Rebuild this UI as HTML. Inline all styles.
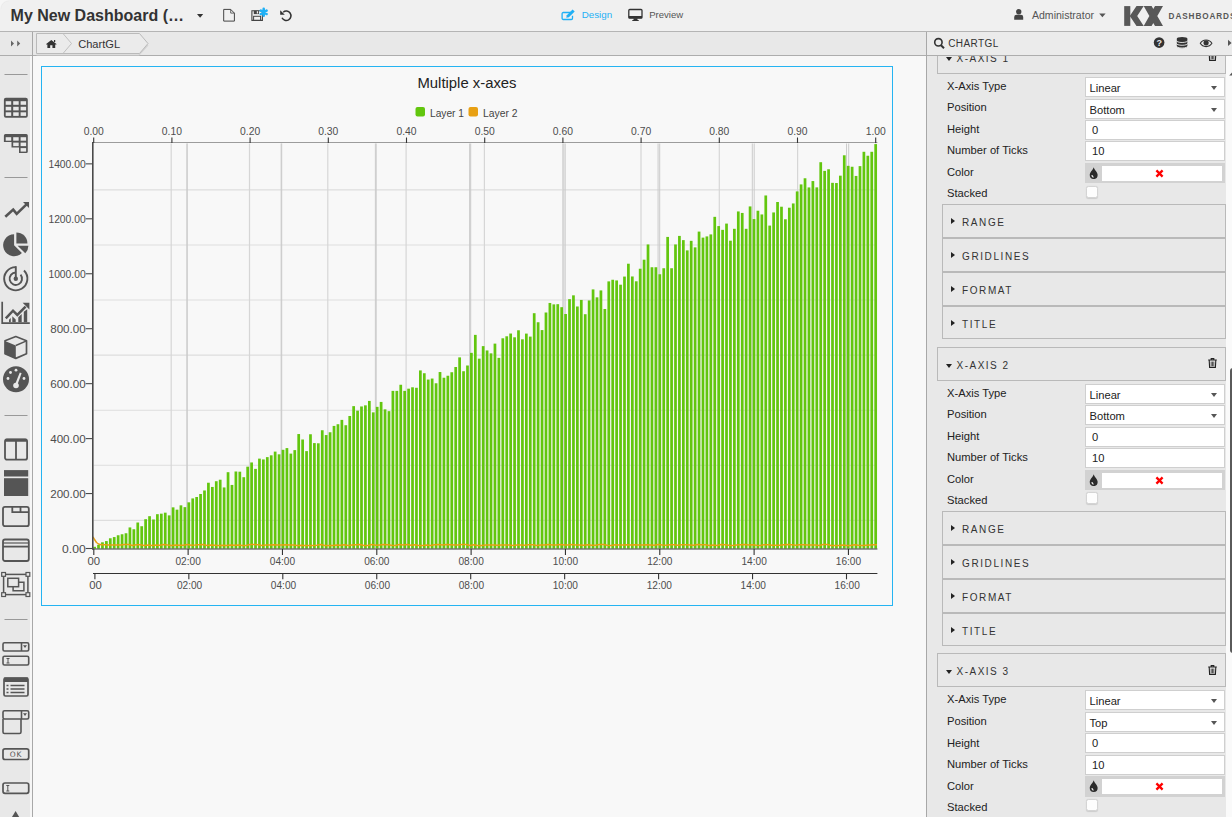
<!DOCTYPE html>
<html lang="en"><head><meta charset="utf-8"><title>My New Dashboard - KX Dashboards</title>
<style>
*{box-sizing:border-box;margin:0;padding:0}
html,body{width:1232px;height:817px;overflow:hidden;background:#f8f8f8;font-family:"Liberation Sans","DejaVu Sans",sans-serif;color:#333}
#top{position:absolute;left:0;top:0;width:1232px;height:31px;background:#f0f0f0}
#topb{position:absolute;left:0;top:31px;width:1232px;height:1px;background:#b4b4b4}
#title{position:absolute;left:10.600px;top:7px;font-size:16px;font-weight:bold;color:#333;white-space:nowrap}
.ti{position:absolute}
#row2{position:absolute;left:0;top:32px;width:1232px;height:23px;background:#e8e8e8}
#row2b{position:absolute;left:0;top:55px;width:1232px;height:1px;background:#adadad}
#side{position:absolute;left:0;top:56px;width:30px;height:761px;background:#e8e8e8}
#sidew{position:absolute;left:30px;top:56px;width:2px;height:761px;background:#f6f6f6}
#sideb{position:absolute;left:32px;top:32px;width:1px;height:785px;background:#a8a8a8}
#sidesvg{position:absolute;left:0;top:32px}
#crumb{position:absolute;left:36px;top:33px}
#crumbt{position:absolute;left:78.200px;top:38px;font-size:11.100px;color:#333}
#chartbox{position:absolute;left:41px;top:66px;width:852px;height:540px;border:1px solid #25b4f2;background:#f8f8f8}
.chart{position:absolute;left:0;top:0}
#mode{position:absolute;top:0;left:0}
.mt{position:absolute;top:8.5px;font-size:10.5px}
#rp{position:absolute;left:927px;top:56px;width:299px;height:761px;background:#e8e8e8;overflow:hidden}
#rpb{position:absolute;left:926px;top:32px;width:1px;height:785px;background:#a8a8a8}
#rph{position:absolute;left:927px;top:32px;width:305px;height:23px;background:#ebebeb}
#rpt{position:absolute;left:948.200px;top:37.500px;font-size:10px;letter-spacing:0.400px;color:#333}
#sb{position:absolute;left:1226px;top:56px;width:6px;height:761px;background:#fafafa}
#sbt{position:absolute;left:1229.500px;top:367.500px;width:6px;height:285px;background:#5a5a5a;border-radius:3px}
.sec{position:absolute;left:10px;width:289px;height:33.500px;border:1px solid #b9b9b9;background:#e8e8e8}
.sect{position:absolute;left:18.600px;top:11.800px;font-size:10px;letter-spacing:1.470px;color:#333}
.caret-d{position:absolute;left:8px;top:15.500px;border-left:3.500px solid transparent;border-right:3.500px solid transparent;border-top:4px solid #222}
.trash{position:absolute;left:270px;top:9.500px}
.lbl{position:absolute;left:20px;font-size:11.200px;color:#222;height:20px;line-height:17px;white-space:nowrap}
.inp{position:absolute;left:158px;width:140px;height:20px;border:1px solid #cfcfcf;background:#fff;font-size:11.200px;color:#222;line-height:20px;white-space:nowrap}
.sel{padding-left:3.500px}
.num{padding-left:6px;line-height:18.600px}
.sel i{position:absolute;right:7px;top:8px;border-left:3px solid transparent;border-right:3px solid transparent;border-top:4px solid #555}
.col{position:absolute;left:158px;width:140px;height:20.500px;background:#d2d2d2}
.drop{position:absolute;left:4.300px;top:4.100px}
.colw{position:absolute;left:16.500px;top:3px;width:120.500px;height:15px;background:#fff}
.rx{position:absolute;left:53.300px;top:3.100px}
.chk{position:absolute;left:158.500px;width:12px;height:12px;border:1px solid #d4d4d4;border-radius:2.500px;background:#fdfdfd;box-shadow:0 0.500px 1px rgba(0,0,0,.12)}
.sub{position:absolute;left:14.500px;width:284.500px;height:33px;border:1px solid #b9b9b9;background:#e8e8e8}
.subt{position:absolute;left:19.500px;top:12.300px;font-size:10px;letter-spacing:1.600px;color:#333}
.caret-r{position:absolute;left:8.800px;top:13.500px;border-top:3.500px solid transparent;border-bottom:3.500px solid transparent;border-left:4.500px solid #222}
</style></head><body>
<div id="top"></div><div id="topb"></div>
<div id="corner" style="position:absolute;left:0;top:0;width:9px;height:9px;background:radial-gradient(circle at 100% 100%,rgba(246,246,246,0) 7.200px,#ebebeb 8px,#f6f6f6 9px)"></div>
<div id="title">My New Dashboard (…</div>
<svg id="mode" width="1232" height="31" viewBox="0 0 1232 31" font-family="'Liberation Sans','DejaVu Sans',sans-serif">
 <!-- title caret -->
 <path d="M197 14h6.200l-3.100 3.800z" fill="#333"/>
 <!-- new file -->
 <path d="M223.700 9.400h7l3.700 3.700v8h-10.700z" fill="none" stroke="#444" stroke-width="1"/><path d="M230.700 9.400v3.700h3.700" fill="none" stroke="#444" stroke-width="0.800"/>
 <!-- save -->
 <path d="M251.900 10.700h8.800l1.700 1.700v8h-10.500z" fill="none" stroke="#444" stroke-width="1.100"/><rect x="253.800" y="10.700" width="5.200" height="3.400" fill="#444"/><rect x="256.800" y="11.200" width="1.300" height="2.300" fill="#eee"/><rect x="253.600" y="16.300" width="7" height="4.200" fill="none" stroke="#444" stroke-width="1"/>
 <g stroke="#1fb0f5" stroke-width="2.600" stroke-linecap="round"><path d="M263.700 8.900v6.800M260.800 10.600l5.800 3.400M260.800 14l5.800-3.400"/></g>
 <!-- undo -->
 <path d="M283.200 12.200a4.700 4.700 0 1 1-1.200 5.600" fill="none" stroke="#333" stroke-width="1.500"/><path d="M280.200 10.200v4.600h4.600z" fill="#333"/>
 <!-- design -->
 <g fill="none" stroke="#1fb0f5" stroke-width="1.300"><path d="M571.500 12.500v-0h-8.200a1.200 1.200 0 0 0-1.200 1.200v4.600a1.200 1.200 0 0 0 1.200 1.200h8a1.200 1.200 0 0 0 1.200-1.200v-2.600" /></g>
 <path d="M566.300 17.800l0.500-2.600 5.800-5.800 2.100 2.100-5.800 5.800z" fill="#1fb0f5"/>
 <text x="581.700" y="18" font-size="9.800" fill="#1fb0f5" textLength="30.500" lengthAdjust="spacingAndGlyphs">Design</text>
 <!-- preview -->
 <rect x="628.800" y="9.500" width="13.200" height="8.700" rx="1" fill="#f0f0f0" stroke="#333" stroke-width="1.300"/><rect x="628.800" y="16" width="13.200" height="2.200" fill="#333"/><path d="M633.500 18.200h4v1.700h1.200v1h-6.400v-1h1.200z" fill="#333"/>
 <text x="649.200" y="18" font-size="9.800" fill="#555" textLength="34" lengthAdjust="spacingAndGlyphs">Preview</text>
 <!-- user -->
 <circle cx="1018.700" cy="11.800" r="2.700" fill="#444"/><path d="M1014.200 19.700v-2.600a2.400 2.400 0 0 1 2.400-2.400h4.200a2.400 2.400 0 0 1 2.400 2.400v2.600z" fill="#444"/>
 <text x="1032" y="18.600" font-size="10" fill="#555" textLength="62" lengthAdjust="spacingAndGlyphs">Administrator</text>
 <path d="M1099.200 13.600h6.400l-3.200 3.600z" fill="#555"/>
 <!-- KX logo -->
 <g fill="#585858"><rect x="1124.200" y="6.100" width="6.100" height="19.800"/><path d="M1136.500 6.100h7.200l-6.500 9.900 6.500 9.900h-7.200l-6.700-9.900z"/><path d="M1143.700 6.100h7.900l11.400 19.800h-8zM1155 6.100h8l-11.400 19.800h-7.900z"/></g>
 <text x="1168.600" y="18.900" font-size="8.200" font-weight="bold" fill="#585858" textLength="66.800" lengthAdjust="spacing">DASHBOARDS</text>
</svg>
<div id="row2"></div><div id="row2b"></div>
<div id="side"></div><div id="sidew"></div><div id="sideb"></div>
<svg id="sidesvg" width="32" height="785" viewBox="0 32 32 785">
 <!-- expand arrows -->
 <path d="M11 40.500l3 3-3 3zM17.200 40.500l3 3-3 3z" fill="#666"/>
 <g stroke="#999" stroke-width="1"><path d="M4.500 74.500h23M4.500 177.500h23M4.500 415.500h23M4.500 619.500h23"/></g>
 <!-- table -->
 <rect x="3.900" y="97.700" width="23.900" height="20.100" rx="2" fill="#555"/><g fill="#e8e8e8"><rect x="5.7" y="101.2" width="5.500" height="3.600"/><rect x="13.2" y="101.2" width="5.500" height="3.600"/><rect x="20.6" y="101.2" width="5.500" height="3.600"/><rect x="5.7" y="106.8" width="5.500" height="3.600"/><rect x="13.2" y="106.8" width="5.500" height="3.600"/><rect x="20.6" y="106.8" width="5.500" height="3.600"/><rect x="5.7" y="112.3" width="5.500" height="3.600"/><rect x="13.2" y="112.3" width="5.500" height="3.600"/><rect x="20.6" y="112.3" width="5.500" height="3.600"/></g>
 <!-- pivot -->
 <path d="M5.400 134.100h20.900a1.500 1.500 0 0 1 1.500 1.500v15.800a1.500 1.500 0 0 1-1.500 1.500h-7.300v-5.500h-7.500v-5.300h-7.600v-6.500a1.500 1.500 0 0 1 1.500-1.500z" fill="#555"/><g fill="#e8e8e8"><rect x="5.7" y="137.2" width="5.500" height="3.500"/><rect x="13.2" y="137.2" width="5.500" height="3.500"/><rect x="20.6" y="137.2" width="5.500" height="3.500"/><rect x="13.2" y="142.6" width="5.500" height="3.500"/><rect x="20.6" y="142.6" width="5.500" height="3.500"/><rect x="20.6" y="148.1" width="5.500" height="3.500"/></g>
 <!-- line chart -->
 <path d="M5.300 216.800L13.200 209.600L16.700 213.900L26.500 204.400" fill="none" stroke="#555" stroke-width="2.600"/><path d="M23 201.900h6v6z" fill="#555"/>
 <!-- pie -->
 <path d="M14.100 245.300V234.300A11 11 0 1 0 21.900 253.100Z" fill="#555"/>
 <path d="M16.400 243.400V232.400A11 11 0 0 1 27.400 243.400Z" fill="#555"/>
 <path d="M17.600 245.700H28.400A11 11 0 0 1 25.300 253.300Z" fill="#555"/>
 <!-- radar -->
 <g fill="none" stroke="#555" stroke-width="1.900"><path d="M15.800 267.100A11.600 11.600 0 1 0 24 270.500"/><path d="M15.800 272.500A6.200 6.200 0 1 0 20.550 274.700"/><path d="M15.800 266.200V278.700"/></g><circle cx="15.800" cy="278.700" r="2.200" fill="#555"/>
 <!-- line bar chart -->
 <path d="M2.200 301.800v21.300h27.600" fill="none" stroke="#555" stroke-width="1.700"/><path d="M5.800 318.300l7.200-7.600 4.300 4.300 8.300-8.300" fill="none" stroke="#555" stroke-width="2.500"/><path d="M22.600 302.700h6.800v6.800z" fill="#555"/><path d="M9 322.300v-2.500l1.800-1.800v4.300zM12.300 322.300v-6l3.400 3.300v2.700zM18.300 322.300v-5l3.400-3.400v8.400zM23.800 322.300v-10.500l3.400-2.500v13z" fill="#555"/>
 <!-- cube -->
 <path d="M15.800 336.500l10.700 4.200v13l-10.700 4.700-10.800-4.700v-13z" fill="none" stroke="#555" stroke-width="1.700" stroke-linejoin="round"/><path d="M5 341l10.800 4.500v13l-10.800-4.800z" fill="#555"/><path d="M15.800 345.500l10.700-4.600" stroke="#555" stroke-width="1.500"/>
 <!-- gauge -->
 <circle cx="16" cy="379.200" r="13" fill="#555"/><g fill="#e8e8e8"><circle cx="8" cy="378.500" r="1.400"/><circle cx="10.500" cy="372.500" r="1.400"/><circle cx="16" cy="370.200" r="1.400"/><circle cx="24" cy="378.500" r="1.400"/><circle cx="16" cy="385.500" r="2.800"/><path d="M15.200 384l4.600-11.500 1.800 0.700-4.200 11.600z"/></g>
 <!-- split layout -->
 <g fill="none" stroke="#555" stroke-width="1.800"><rect x="5" y="439.500" width="22.100" height="20.200" rx="2"/><path d="M16 440v19.700"/></g><rect x="5" y="438.700" width="22.100" height="3" rx="1" fill="#555"/>
 <!-- filled layout -->
 <rect x="4" y="470.100" width="24.200" height="6.400" fill="#555"/><rect x="4" y="478.200" width="24.200" height="17.800" fill="#555"/>
 <!-- tab layout -->
 <g fill="none" stroke="#555" stroke-width="1.800"><rect x="3" y="506.800" width="25.800" height="19.400" rx="2"/><path d="M12.300 506.800v5.400h16.500M20.500 506.800v5.400"/></g>
 <!-- window layout -->
 <g fill="none" stroke="#555" stroke-width="1.800"><rect x="3" y="539.500" width="25.800" height="21.500" rx="2"/><path d="M3 546.600h25.800"/><path d="M3 543h25.800" stroke-width="1.200"/></g>
 <!-- overlap -->
 <g fill="none" stroke="#555" stroke-width="1.500"><rect x="3.600" y="574.400" width="24.300" height="20.200"/><rect x="7.800" y="578.300" width="10.800" height="8.400"/><path d="M18.600 582.200h5.300v8.600h-10.800v-4.100"/></g><g fill="#e8e8e8" stroke="#555" stroke-width="1.200"><rect x="1.700" y="572.500" width="3.800" height="3.800"/><rect x="26" y="572.500" width="3.800" height="3.800"/><rect x="1.700" y="592.700" width="3.800" height="3.800"/><rect x="26" y="592.700" width="3.800" height="3.800"/></g>
 <!-- dropdown -->
 <g fill="none" stroke="#555" stroke-width="1.600"><rect x="3" y="642.800" width="25.700" height="8.200" rx="1.500"/><path d="M21.500 642.800v8.200"/></g><path d="M23 645.300h4l-2 2.800z" fill="#555"/>
 <!-- text input -->
 <rect x="3" y="656.300" width="25.700" height="8.700" rx="1.500" fill="none" stroke="#555" stroke-width="1.600"/><path d="M6.500 658.500h3M6.500 663h3M8 658.500v4.500" stroke="#555" stroke-width="1"/>
 <!-- data form/list -->
 <rect x="4" y="678" width="24" height="18" rx="1.500" fill="none" stroke="#555" stroke-width="1.700"/><rect x="4" y="677.500" width="24" height="4.500" fill="#555"/><path d="M10.500 685.500h14M10.500 689h14M10.500 692.500h14" stroke="#555" stroke-width="1.300"/><path d="M6.500 685.500h2M6.500 689h2M6.500 692.500h2" stroke="#555" stroke-width="1.300"/>
 <!-- dropdown tree -->
 <g fill="none" stroke="#555" stroke-width="1.600"><rect x="3" y="710.800" width="25.700" height="8.200" rx="1.500"/><path d="M21.500 710.800v8.200"/><path d="M3 719v13a1.500 1.500 0 0 0 1.500 1.500h15a1.500 1.500 0 0 0 1.500-1.500v-13"/></g><path d="M23 713.300h4l-2 2.800z" fill="#555"/>
 <!-- OK -->
 <rect x="3" y="748.800" width="25.700" height="10.700" rx="2" fill="none" stroke="#555" stroke-width="1.700"/><text x="15.900" y="757" font-size="7.500" text-anchor="middle" fill="#555" letter-spacing="0.800" font-family="'DejaVu Sans','Liberation Sans',sans-serif">OK</text>
 <!-- text input 2 -->
 <rect x="3" y="783" width="25.700" height="10.300" rx="2" fill="none" stroke="#555" stroke-width="1.700"/><path d="M6.300 785.500h3M6.300 791h3M7.800 785.500v5.500" stroke="#555" stroke-width="1"/>
 <!-- A -->
 <path d="M12 817l3.600-6 3.600 6z" fill="#555"/>
</svg>

<svg id="crumb" width="118" height="24" viewBox="36 33 118 24">
 <path d="M36.500 55h102.500l9-10" fill="none" stroke="#d2d2d2" stroke-width="1.200"/>
 <path d="M36.500 33.500h103l8.500 10-8.500 10h-103z" fill="#ebebeb" stroke="#bababa" stroke-width="1"/>
 <path d="M63 33.500l8.500 10-8.500 10" fill="none" stroke="#c0c0c0" stroke-width="1"/>
 <g transform="translate(51.300 0) scale(1.120 1) translate(-50.600 -0.300)"><path d="M46 44.200l4.600-4 4.600 4v0.600h-1.100v3.400h-2.500v-2.600h-2v2.600h-2.500v-3.400h-1.100z" fill="#333"/><rect x="53" y="40.300" width="1.100" height="2" fill="#333"/></g>
</svg>
<div id="crumbt">ChartGL</div>
<div id="chartbox"><svg class="chart" width="850" height="538" viewBox="42 67 850 538" font-family="'Liberation Sans','DejaVu Sans',sans-serif">
<line x1="93.5" x2="877" y1="520.40" y2="520.40" stroke="#dedede" stroke-width="1.1"/>
<line x1="93.5" x2="877" y1="465.31" y2="465.31" stroke="#dedede" stroke-width="1.1"/>
<line x1="93.5" x2="877" y1="410.22" y2="410.22" stroke="#dedede" stroke-width="1.1"/>
<line x1="93.5" x2="877" y1="355.13" y2="355.13" stroke="#dedede" stroke-width="1.1"/>
<line x1="93.5" x2="877" y1="300.04" y2="300.04" stroke="#dedede" stroke-width="1.1"/>
<line x1="93.5" x2="877" y1="244.95" y2="244.95" stroke="#dedede" stroke-width="1.1"/>
<line x1="93.5" x2="877" y1="189.86" y2="189.86" stroke="#dedede" stroke-width="1.1"/>
<line x1="171.20" x2="171.20" y1="143.5" y2="548" stroke="#d6d6d6" stroke-width="1.2"/>
<line x1="249.50" x2="249.50" y1="143.5" y2="548" stroke="#d6d6d6" stroke-width="1.2"/>
<line x1="327.80" x2="327.80" y1="143.5" y2="548" stroke="#d6d6d6" stroke-width="1.2"/>
<line x1="406.10" x2="406.10" y1="143.5" y2="548" stroke="#d6d6d6" stroke-width="1.2"/>
<line x1="484.40" x2="484.40" y1="143.5" y2="548" stroke="#d6d6d6" stroke-width="1.2"/>
<line x1="562.70" x2="562.70" y1="143.5" y2="548" stroke="#d6d6d6" stroke-width="1.2"/>
<line x1="641.00" x2="641.00" y1="143.5" y2="548" stroke="#d6d6d6" stroke-width="1.2"/>
<line x1="719.30" x2="719.30" y1="143.5" y2="548" stroke="#d6d6d6" stroke-width="1.2"/>
<line x1="797.60" x2="797.60" y1="143.5" y2="548" stroke="#d6d6d6" stroke-width="1.2"/>
<line x1="875.90" x2="875.90" y1="143.5" y2="548" stroke="#d6d6d6" stroke-width="1.2"/>
<line x1="187.20" x2="187.20" y1="143.5" y2="548" stroke="#cbcbcb" stroke-width="1"/>
<line x1="186.93" x2="186.93" y1="143.5" y2="548" stroke="#cbcbcb" stroke-width="1"/>
<line x1="281.70" x2="281.70" y1="143.5" y2="548" stroke="#cbcbcb" stroke-width="1"/>
<line x1="281.16" x2="281.16" y1="143.5" y2="548" stroke="#cbcbcb" stroke-width="1"/>
<line x1="376.20" x2="376.20" y1="143.5" y2="548" stroke="#cbcbcb" stroke-width="1"/>
<line x1="375.39" x2="375.39" y1="143.5" y2="548" stroke="#cbcbcb" stroke-width="1"/>
<line x1="470.70" x2="470.70" y1="143.5" y2="548" stroke="#cbcbcb" stroke-width="1"/>
<line x1="469.62" x2="469.62" y1="143.5" y2="548" stroke="#cbcbcb" stroke-width="1"/>
<line x1="565.20" x2="565.20" y1="143.5" y2="548" stroke="#cbcbcb" stroke-width="1"/>
<line x1="563.85" x2="563.85" y1="143.5" y2="548" stroke="#cbcbcb" stroke-width="1"/>
<line x1="659.70" x2="659.70" y1="143.5" y2="548" stroke="#cbcbcb" stroke-width="1"/>
<line x1="658.08" x2="658.08" y1="143.5" y2="548" stroke="#cbcbcb" stroke-width="1"/>
<line x1="754.20" x2="754.20" y1="143.5" y2="548" stroke="#cbcbcb" stroke-width="1"/>
<line x1="752.31" x2="752.31" y1="143.5" y2="548" stroke="#cbcbcb" stroke-width="1"/>
<line x1="848.70" x2="848.70" y1="143.5" y2="548" stroke="#cbcbcb" stroke-width="1"/>
<line x1="846.54" x2="846.54" y1="143.5" y2="548" stroke="#cbcbcb" stroke-width="1"/>
<g fill="#62c60e">
<rect x="93.24" y="546.81" width="2.72" height="1.79"/>
<rect x="97.16" y="544.80" width="2.72" height="3.80"/>
<rect x="101.09" y="542.29" width="2.72" height="6.31"/>
<rect x="105.02" y="541.08" width="2.72" height="7.52"/>
<rect x="108.94" y="538.27" width="2.72" height="10.33"/>
<rect x="112.86" y="537.07" width="2.72" height="11.53"/>
<rect x="116.79" y="535.26" width="2.72" height="13.34"/>
<rect x="120.71" y="534.26" width="2.72" height="14.34"/>
<rect x="124.64" y="533.25" width="2.72" height="15.35"/>
<rect x="128.56" y="527.43" width="2.72" height="21.17"/>
<rect x="132.49" y="529.24" width="2.72" height="19.36"/>
<rect x="136.41" y="522.51" width="2.72" height="26.09"/>
<rect x="140.34" y="526.22" width="2.72" height="22.38"/>
<rect x="144.26" y="519.20" width="2.72" height="29.40"/>
<rect x="148.19" y="516.18" width="2.72" height="32.42"/>
<rect x="152.11" y="519.50" width="2.72" height="29.10"/>
<rect x="156.04" y="514.18" width="2.72" height="34.42"/>
<rect x="159.96" y="513.67" width="2.72" height="34.93"/>
<rect x="163.89" y="512.67" width="2.72" height="35.93"/>
<rect x="167.81" y="515.38" width="2.72" height="33.22"/>
<rect x="171.74" y="507.35" width="2.72" height="41.25"/>
<rect x="175.66" y="509.66" width="2.72" height="38.94"/>
<rect x="179.59" y="505.34" width="2.72" height="43.26"/>
<rect x="183.51" y="507.15" width="2.72" height="41.45"/>
<rect x="187.44" y="502.33" width="2.72" height="46.27"/>
<rect x="191.36" y="498.41" width="2.72" height="50.19"/>
<rect x="195.29" y="497.00" width="2.72" height="51.60"/>
<rect x="199.21" y="493.99" width="2.72" height="54.61"/>
<rect x="203.14" y="490.46" width="2.72" height="58.14"/>
<rect x="207.06" y="482.73" width="2.72" height="65.87"/>
<rect x="210.99" y="486.95" width="2.72" height="61.65"/>
<rect x="214.91" y="481.22" width="2.72" height="67.38"/>
<rect x="218.84" y="479.72" width="2.72" height="68.88"/>
<rect x="222.76" y="487.45" width="2.72" height="61.15"/>
<rect x="226.69" y="472.19" width="2.72" height="76.41"/>
<rect x="230.61" y="484.94" width="2.72" height="63.66"/>
<rect x="234.54" y="471.49" width="2.72" height="77.11"/>
<rect x="238.46" y="471.69" width="2.72" height="76.91"/>
<rect x="242.39" y="477.21" width="2.72" height="71.39"/>
<rect x="246.31" y="466.67" width="2.72" height="81.93"/>
<rect x="250.24" y="462.45" width="2.72" height="86.15"/>
<rect x="254.16" y="468.88" width="2.72" height="79.72"/>
<rect x="258.09" y="458.63" width="2.72" height="89.97"/>
<rect x="262.01" y="459.44" width="2.72" height="89.16"/>
<rect x="265.94" y="457.13" width="2.72" height="91.47"/>
<rect x="269.87" y="455.32" width="2.72" height="93.28"/>
<rect x="273.79" y="451.61" width="2.72" height="96.99"/>
<rect x="277.71" y="454.32" width="2.72" height="94.28"/>
<rect x="281.64" y="449.80" width="2.72" height="98.80"/>
<rect x="285.56" y="448.09" width="2.72" height="100.51"/>
<rect x="289.49" y="453.61" width="2.72" height="94.99"/>
<rect x="293.41" y="450.10" width="2.72" height="98.50"/>
<rect x="297.34" y="434.04" width="2.72" height="114.56"/>
<rect x="301.26" y="439.52" width="2.72" height="109.08"/>
<rect x="305.19" y="451.12" width="2.72" height="97.48"/>
<rect x="309.12" y="434.26" width="2.72" height="114.34"/>
<rect x="313.04" y="443.09" width="2.72" height="105.51"/>
<rect x="316.96" y="443.29" width="2.72" height="105.31"/>
<rect x="320.89" y="430.24" width="2.72" height="118.36"/>
<rect x="324.81" y="435.06" width="2.72" height="113.54"/>
<rect x="328.74" y="432.25" width="2.72" height="116.35"/>
<rect x="332.66" y="425.92" width="2.72" height="122.68"/>
<rect x="336.59" y="424.22" width="2.72" height="124.38"/>
<rect x="340.51" y="419.90" width="2.72" height="128.70"/>
<rect x="344.44" y="425.22" width="2.72" height="123.38"/>
<rect x="348.37" y="415.98" width="2.72" height="132.62"/>
<rect x="352.29" y="406.14" width="2.72" height="142.46"/>
<rect x="356.21" y="410.66" width="2.72" height="137.94"/>
<rect x="360.14" y="406.45" width="2.72" height="142.15"/>
<rect x="364.06" y="405.34" width="2.72" height="143.26"/>
<rect x="367.99" y="400.92" width="2.72" height="147.68"/>
<rect x="371.91" y="412.37" width="2.72" height="136.23"/>
<rect x="375.84" y="406.85" width="2.72" height="141.75"/>
<rect x="379.76" y="401.93" width="2.72" height="146.67"/>
<rect x="383.69" y="409.36" width="2.72" height="139.24"/>
<rect x="387.62" y="411.16" width="2.72" height="137.44"/>
<rect x="391.54" y="390.88" width="2.72" height="157.72"/>
<rect x="395.46" y="390.88" width="2.72" height="157.72"/>
<rect x="399.39" y="384.76" width="2.72" height="163.84"/>
<rect x="403.31" y="390.88" width="2.72" height="157.72"/>
<rect x="407.24" y="388.68" width="2.72" height="159.92"/>
<rect x="411.16" y="387.29" width="2.72" height="161.31"/>
<rect x="415.09" y="387.79" width="2.72" height="160.81"/>
<rect x="419.01" y="370.42" width="2.72" height="178.18"/>
<rect x="422.94" y="373.23" width="2.72" height="175.37"/>
<rect x="426.87" y="379.56" width="2.72" height="169.04"/>
<rect x="430.79" y="378.55" width="2.72" height="170.05"/>
<rect x="434.71" y="383.27" width="2.72" height="165.33"/>
<rect x="438.64" y="372.03" width="2.72" height="176.57"/>
<rect x="442.56" y="377.75" width="2.72" height="170.85"/>
<rect x="446.49" y="375.74" width="2.72" height="172.86"/>
<rect x="450.41" y="372.23" width="2.72" height="176.37"/>
<rect x="454.34" y="367.01" width="2.72" height="181.59"/>
<rect x="458.26" y="357.37" width="2.72" height="191.23"/>
<rect x="462.19" y="371.22" width="2.72" height="177.38"/>
<rect x="466.12" y="365.50" width="2.72" height="183.10"/>
<rect x="470.04" y="352.85" width="2.72" height="195.75"/>
<rect x="473.96" y="334.88" width="2.72" height="213.72"/>
<rect x="477.89" y="358.67" width="2.72" height="189.93"/>
<rect x="481.81" y="346.12" width="2.72" height="202.48"/>
<rect x="485.74" y="350.44" width="2.72" height="198.16"/>
<rect x="489.66" y="353.35" width="2.72" height="195.25"/>
<rect x="493.59" y="343.61" width="2.72" height="204.99"/>
<rect x="497.51" y="357.87" width="2.72" height="190.73"/>
<rect x="501.44" y="338.29" width="2.72" height="210.31"/>
<rect x="505.37" y="336.29" width="2.72" height="212.31"/>
<rect x="509.29" y="333.53" width="2.72" height="215.07"/>
<rect x="513.21" y="337.30" width="2.72" height="211.30"/>
<rect x="517.14" y="330.27" width="2.72" height="218.33"/>
<rect x="521.06" y="339.31" width="2.72" height="209.29"/>
<rect x="524.99" y="333.59" width="2.72" height="215.01"/>
<rect x="528.91" y="336.60" width="2.72" height="212.00"/>
<rect x="532.84" y="313.20" width="2.72" height="235.40"/>
<rect x="536.76" y="322.24" width="2.72" height="226.36"/>
<rect x="540.69" y="330.07" width="2.72" height="218.53"/>
<rect x="544.62" y="312.50" width="2.72" height="236.10"/>
<rect x="548.54" y="302.96" width="2.72" height="245.64"/>
<rect x="552.46" y="304.37" width="2.72" height="244.23"/>
<rect x="556.39" y="304.17" width="2.72" height="244.43"/>
<rect x="560.31" y="307.18" width="2.72" height="241.42"/>
<rect x="564.24" y="314.01" width="2.72" height="234.59"/>
<rect x="568.16" y="299.15" width="2.72" height="249.45"/>
<rect x="572.09" y="295.33" width="2.72" height="253.27"/>
<rect x="576.01" y="306.48" width="2.72" height="242.12"/>
<rect x="579.94" y="299.95" width="2.72" height="248.65"/>
<rect x="583.87" y="314.21" width="2.72" height="234.39"/>
<rect x="587.79" y="300.45" width="2.72" height="248.15"/>
<rect x="591.71" y="289.41" width="2.72" height="259.19"/>
<rect x="595.64" y="297.34" width="2.72" height="251.26"/>
<rect x="599.56" y="290.41" width="2.72" height="258.19"/>
<rect x="603.49" y="308.99" width="2.72" height="239.61"/>
<rect x="607.41" y="281.38" width="2.72" height="267.22"/>
<rect x="611.34" y="279.77" width="2.72" height="268.83"/>
<rect x="615.26" y="280.43" width="2.72" height="268.17"/>
<rect x="619.19" y="284.70" width="2.72" height="263.90"/>
<rect x="623.12" y="276.57" width="2.72" height="272.03"/>
<rect x="627.04" y="263.72" width="2.72" height="284.88"/>
<rect x="630.97" y="276.47" width="2.72" height="272.13"/>
<rect x="634.89" y="281.29" width="2.72" height="267.31"/>
<rect x="638.81" y="268.74" width="2.72" height="279.86"/>
<rect x="642.74" y="259.71" width="2.72" height="288.89"/>
<rect x="646.66" y="244.45" width="2.72" height="304.15"/>
<rect x="650.59" y="267.24" width="2.72" height="281.36"/>
<rect x="654.51" y="267.24" width="2.72" height="281.36"/>
<rect x="658.44" y="274.27" width="2.72" height="274.33"/>
<rect x="662.37" y="268.24" width="2.72" height="280.36"/>
<rect x="666.29" y="236.92" width="2.72" height="311.68"/>
<rect x="670.22" y="268.24" width="2.72" height="280.36"/>
<rect x="674.14" y="244.45" width="2.72" height="304.15"/>
<rect x="678.06" y="235.91" width="2.72" height="312.69"/>
<rect x="681.99" y="240.13" width="2.72" height="308.47"/>
<rect x="685.91" y="250.37" width="2.72" height="298.23"/>
<rect x="689.84" y="240.83" width="2.72" height="307.77"/>
<rect x="693.76" y="247.36" width="2.72" height="301.24"/>
<rect x="697.69" y="231.59" width="2.72" height="317.01"/>
<rect x="701.62" y="237.62" width="2.72" height="310.98"/>
<rect x="705.54" y="236.41" width="2.72" height="312.19"/>
<rect x="709.47" y="234.41" width="2.72" height="314.19"/>
<rect x="713.39" y="216.84" width="2.72" height="331.76"/>
<rect x="717.31" y="226.07" width="2.72" height="322.53"/>
<rect x="721.24" y="229.85" width="2.72" height="318.75"/>
<rect x="725.16" y="223.59" width="2.72" height="325.01"/>
<rect x="729.09" y="240.70" width="2.72" height="307.90"/>
<rect x="733.01" y="228.81" width="2.72" height="319.79"/>
<rect x="736.94" y="211.44" width="2.72" height="337.16"/>
<rect x="740.87" y="212.94" width="2.72" height="335.66"/>
<rect x="744.79" y="228.81" width="2.72" height="319.79"/>
<rect x="748.72" y="206.42" width="2.72" height="342.18"/>
<rect x="752.64" y="219.07" width="2.72" height="329.53"/>
<rect x="756.56" y="210.73" width="2.72" height="337.87"/>
<rect x="760.49" y="214.45" width="2.72" height="334.15"/>
<rect x="764.41" y="195.47" width="2.72" height="353.13"/>
<rect x="768.34" y="225.59" width="2.72" height="323.01"/>
<rect x="772.26" y="212.44" width="2.72" height="336.16"/>
<rect x="776.19" y="202.00" width="2.72" height="346.60"/>
<rect x="780.12" y="206.72" width="2.72" height="341.88"/>
<rect x="784.04" y="219.27" width="2.72" height="329.33"/>
<rect x="787.97" y="207.72" width="2.72" height="340.88"/>
<rect x="791.89" y="203.45" width="2.72" height="345.15"/>
<rect x="795.81" y="191.41" width="2.72" height="357.19"/>
<rect x="799.74" y="184.41" width="2.72" height="364.19"/>
<rect x="803.66" y="178.27" width="2.72" height="370.33"/>
<rect x="807.59" y="187.43" width="2.72" height="361.17"/>
<rect x="811.51" y="181.06" width="2.72" height="367.54"/>
<rect x="815.44" y="187.38" width="2.72" height="361.22"/>
<rect x="819.37" y="162.20" width="2.72" height="386.40"/>
<rect x="823.29" y="170.88" width="2.72" height="377.72"/>
<rect x="827.22" y="169.26" width="2.72" height="379.34"/>
<rect x="831.14" y="182.83" width="2.72" height="365.77"/>
<rect x="835.06" y="183.02" width="2.72" height="365.58"/>
<rect x="838.99" y="175.67" width="2.72" height="372.93"/>
<rect x="842.91" y="155.28" width="2.72" height="393.32"/>
<rect x="846.84" y="165.84" width="2.72" height="382.76"/>
<rect x="850.76" y="166.76" width="2.72" height="381.84"/>
<rect x="854.69" y="175.94" width="2.72" height="372.66"/>
<rect x="858.62" y="166.12" width="2.72" height="382.48"/>
<rect x="862.54" y="151.79" width="2.72" height="396.81"/>
<rect x="866.46" y="155.74" width="2.72" height="392.86"/>
<rect x="870.39" y="151.79" width="2.72" height="396.81"/>
<rect x="874.31" y="144.08" width="2.72" height="404.52"/>
</g>
<polyline fill="none" stroke="#e8a013" stroke-width="1.5" stroke-linejoin="round" points="93.0,536.8 94.5,539.5 96.5,542.5 98.5,544.0 101.0,544.7 104.9,544.7 108.8,545.0 112.8,544.9 116.7,545.1 120.6,545.1 124.5,544.5 128.5,544.5 132.4,545.4 136.3,544.7 140.3,544.7 144.2,545.5 148.1,545.0 152.0,545.4 156.0,545.0 159.9,545.2 163.8,544.6 167.7,545.1 171.7,545.4 175.6,545.0 179.5,545.3 183.4,545.2 187.4,544.5 191.3,545.3 195.2,545.1 199.1,544.8 203.1,544.5 207.0,545.4 210.9,545.0 214.8,545.2 218.8,545.4 222.7,545.2 226.6,545.5 230.5,544.9 234.5,545.3 238.4,544.9 242.3,545.5 246.2,545.4 250.2,544.6 254.1,544.6 258.0,544.7 261.9,545.5 265.9,544.9 269.8,545.1 273.7,544.8 277.6,545.0 281.6,544.9 285.5,544.8 289.4,545.1 293.3,545.1 297.3,545.4 301.2,545.2 305.1,545.5 309.0,545.4 313.0,545.5 316.9,545.2 320.8,544.6 324.7,545.4 328.7,545.5 332.6,545.4 336.5,545.1 340.4,545.2 344.4,544.7 348.3,545.4 352.2,545.1 356.1,544.8 360.1,544.5 364.0,545.4 367.9,545.5 371.8,544.5 375.8,545.3 379.7,544.9 383.6,544.6 387.5,544.8 391.5,545.3 395.4,545.4 399.3,544.5 403.2,545.1 407.2,544.5 411.1,545.2 415.0,544.8 418.9,545.4 422.9,545.5 426.8,545.0 430.7,545.5 434.6,544.8 438.6,544.5 442.5,545.1 446.4,544.5 450.3,544.7 454.3,544.9 458.2,545.1 462.1,544.6 466.0,544.5 470.0,545.4 473.9,544.8 477.8,545.5 481.7,545.4 485.7,544.9 489.6,545.0 493.5,545.0 497.4,545.2 501.4,545.1 505.3,545.1 509.2,545.1 513.1,545.5 517.1,545.0 521.0,544.9 524.9,545.2 528.8,544.7 532.8,544.8 536.7,545.5 540.6,545.0 544.5,545.1 548.5,544.5 552.4,544.9 556.3,545.1 560.2,544.5 564.2,545.1 568.1,545.1 572.0,544.5 575.9,545.1 579.9,545.0 583.8,545.2 587.7,544.8 591.6,545.2 595.6,545.3 599.5,544.5 603.4,544.5 607.3,545.2 611.2,545.5 615.2,544.7 619.1,545.0 623.0,545.1 626.9,544.8 630.9,544.9 634.8,544.8 638.7,544.9 642.6,545.1 646.6,544.8 650.5,544.9 654.4,545.3 658.3,544.5 662.3,545.1 666.2,545.3 670.1,544.8 674.0,544.7 678.0,545.3 681.9,544.7 685.8,544.7 689.7,544.9 693.7,545.2 697.6,544.6 701.5,544.8 705.4,544.8 709.4,545.4 713.3,544.9 717.2,545.4 721.1,544.6 725.1,544.8 729.0,545.2 732.9,545.4 736.8,544.9 740.8,544.7 744.7,544.6 748.6,545.0 752.5,544.7 756.5,545.3 760.4,545.4 764.3,544.7 768.2,544.8 772.2,545.3 776.1,545.2 780.0,545.3 783.9,544.8 787.9,544.6 791.8,544.8 795.7,545.3 799.6,544.7 803.6,544.8 807.5,544.9 811.4,544.9 815.3,544.9 819.3,545.5 823.2,544.6 827.1,544.5 831.0,545.5 835.0,545.4 838.9,545.5 842.8,544.9 846.7,545.5 850.7,545.5 854.6,544.7 858.5,545.3 862.4,545.4 866.4,545.2 870.3,545.0 874.2,544.8 877.0,544.8"/>
<line x1="92.8" x2="92.8" y1="142" y2="549.5" stroke="#4a4a4a" stroke-width="1.6"/>
<line x1="92" x2="877.4" y1="549" y2="549" stroke="#3c3c3c" stroke-width="1.2"/>
<line x1="93" x2="877.4" y1="142.5" y2="142.5" stroke="#9c9c9c" stroke-width="1"/>
<line x1="93" x2="877.4" y1="573.5" y2="573.5" stroke="#333" stroke-width="1.1"/>
<line x1="85.7" x2="93" y1="548.50" y2="548.50" stroke="#4a4a4a" stroke-width="1.1"/>
<text x="85.7" y="552.60" font-size="11.7" text-anchor="end" fill="#4d4d4d" textLength="23.6" lengthAdjust="spacingAndGlyphs">0.00</text>
<line x1="85.7" x2="93" y1="493.55" y2="493.55" stroke="#4a4a4a" stroke-width="1.1"/>
<text x="85.7" y="497.65" font-size="11.7" text-anchor="end" fill="#4d4d4d" textLength="35.5" lengthAdjust="spacingAndGlyphs">200.00</text>
<line x1="85.7" x2="93" y1="438.60" y2="438.60" stroke="#4a4a4a" stroke-width="1.1"/>
<text x="85.7" y="442.70" font-size="11.7" text-anchor="end" fill="#4d4d4d" textLength="35.5" lengthAdjust="spacingAndGlyphs">400.00</text>
<line x1="85.7" x2="93" y1="383.65" y2="383.65" stroke="#4a4a4a" stroke-width="1.1"/>
<text x="85.7" y="387.75" font-size="11.7" text-anchor="end" fill="#4d4d4d" textLength="35.5" lengthAdjust="spacingAndGlyphs">600.00</text>
<line x1="85.7" x2="93" y1="328.70" y2="328.70" stroke="#4a4a4a" stroke-width="1.1"/>
<text x="85.7" y="332.80" font-size="11.7" text-anchor="end" fill="#4d4d4d" textLength="35.5" lengthAdjust="spacingAndGlyphs">800.00</text>
<line x1="85.7" x2="93" y1="273.75" y2="273.75" stroke="#4a4a4a" stroke-width="1.1"/>
<text x="85.7" y="277.85" font-size="11.7" text-anchor="end" fill="#4d4d4d" textLength="37.3" lengthAdjust="spacingAndGlyphs">1000.00</text>
<line x1="85.7" x2="93" y1="218.80" y2="218.80" stroke="#4a4a4a" stroke-width="1.1"/>
<text x="85.7" y="222.90" font-size="11.7" text-anchor="end" fill="#4d4d4d" textLength="37.3" lengthAdjust="spacingAndGlyphs">1200.00</text>
<line x1="85.7" x2="93" y1="163.85" y2="163.85" stroke="#4a4a4a" stroke-width="1.1"/>
<text x="85.7" y="167.95" font-size="11.7" text-anchor="end" fill="#4d4d4d" textLength="37.3" lengthAdjust="spacingAndGlyphs">1400.00</text>
<line x1="93.70" x2="93.70" y1="137.5" y2="143" stroke="#333" stroke-width="1.1"/>
<text x="93.70" y="134.7" font-size="11.5" text-anchor="middle" fill="#4d4d4d" textLength="20.1" lengthAdjust="spacingAndGlyphs">0.00</text>
<line x1="171.90" x2="171.90" y1="137.5" y2="143" stroke="#333" stroke-width="1.1"/>
<text x="171.90" y="134.7" font-size="11.5" text-anchor="middle" fill="#4d4d4d" textLength="20.1" lengthAdjust="spacingAndGlyphs">0.10</text>
<line x1="250.10" x2="250.10" y1="137.5" y2="143" stroke="#333" stroke-width="1.1"/>
<text x="250.10" y="134.7" font-size="11.5" text-anchor="middle" fill="#4d4d4d" textLength="20.1" lengthAdjust="spacingAndGlyphs">0.20</text>
<line x1="328.30" x2="328.30" y1="137.5" y2="143" stroke="#333" stroke-width="1.1"/>
<text x="328.30" y="134.7" font-size="11.5" text-anchor="middle" fill="#4d4d4d" textLength="20.1" lengthAdjust="spacingAndGlyphs">0.30</text>
<line x1="406.50" x2="406.50" y1="137.5" y2="143" stroke="#333" stroke-width="1.1"/>
<text x="406.50" y="134.7" font-size="11.5" text-anchor="middle" fill="#4d4d4d" textLength="20.1" lengthAdjust="spacingAndGlyphs">0.40</text>
<line x1="484.70" x2="484.70" y1="137.5" y2="143" stroke="#333" stroke-width="1.1"/>
<text x="484.70" y="134.7" font-size="11.5" text-anchor="middle" fill="#4d4d4d" textLength="20.1" lengthAdjust="spacingAndGlyphs">0.50</text>
<line x1="562.90" x2="562.90" y1="137.5" y2="143" stroke="#333" stroke-width="1.1"/>
<text x="562.90" y="134.7" font-size="11.5" text-anchor="middle" fill="#4d4d4d" textLength="20.1" lengthAdjust="spacingAndGlyphs">0.60</text>
<line x1="641.10" x2="641.10" y1="137.5" y2="143" stroke="#333" stroke-width="1.1"/>
<text x="641.10" y="134.7" font-size="11.5" text-anchor="middle" fill="#4d4d4d" textLength="20.1" lengthAdjust="spacingAndGlyphs">0.70</text>
<line x1="719.30" x2="719.30" y1="137.5" y2="143" stroke="#333" stroke-width="1.1"/>
<text x="719.30" y="134.7" font-size="11.5" text-anchor="middle" fill="#4d4d4d" textLength="20.1" lengthAdjust="spacingAndGlyphs">0.80</text>
<line x1="797.50" x2="797.50" y1="137.5" y2="143" stroke="#333" stroke-width="1.1"/>
<text x="797.50" y="134.7" font-size="11.5" text-anchor="middle" fill="#4d4d4d" textLength="20.1" lengthAdjust="spacingAndGlyphs">0.90</text>
<line x1="875.70" x2="875.70" y1="137.5" y2="143" stroke="#333" stroke-width="1.1"/>
<text x="875.70" y="134.7" font-size="11.5" text-anchor="middle" fill="#4d4d4d" textLength="20.1" lengthAdjust="spacingAndGlyphs">1.00</text>
<line x1="93.80" x2="93.80" y1="549" y2="555" stroke="#333" stroke-width="1.1"/>
<text x="93.80" y="564.8" font-size="11.5" text-anchor="middle" fill="#4d4d4d" textLength="12.6" lengthAdjust="spacingAndGlyphs">00</text>
<line x1="94.90" x2="94.90" y1="573.5" y2="579.3" stroke="#333" stroke-width="1.1"/>
<text x="95.60" y="588.9" font-size="11.5" text-anchor="middle" fill="#4d4d4d" textLength="12.6" lengthAdjust="spacingAndGlyphs">00</text>
<line x1="188.13" x2="188.13" y1="549" y2="555" stroke="#333" stroke-width="1.1"/>
<text x="188.13" y="564.8" font-size="11.5" text-anchor="middle" fill="#4d4d4d" textLength="25.3" lengthAdjust="spacingAndGlyphs">02:00</text>
<line x1="188.85" x2="188.85" y1="573.5" y2="579.3" stroke="#333" stroke-width="1.1"/>
<text x="189.55" y="588.9" font-size="11.5" text-anchor="middle" fill="#4d4d4d" textLength="25.3" lengthAdjust="spacingAndGlyphs">02:00</text>
<line x1="282.46" x2="282.46" y1="549" y2="555" stroke="#333" stroke-width="1.1"/>
<text x="282.46" y="564.8" font-size="11.5" text-anchor="middle" fill="#4d4d4d" textLength="25.3" lengthAdjust="spacingAndGlyphs">04:00</text>
<line x1="282.80" x2="282.80" y1="573.5" y2="579.3" stroke="#333" stroke-width="1.1"/>
<text x="283.50" y="588.9" font-size="11.5" text-anchor="middle" fill="#4d4d4d" textLength="25.3" lengthAdjust="spacingAndGlyphs">04:00</text>
<line x1="376.79" x2="376.79" y1="549" y2="555" stroke="#333" stroke-width="1.1"/>
<text x="376.79" y="564.8" font-size="11.5" text-anchor="middle" fill="#4d4d4d" textLength="25.3" lengthAdjust="spacingAndGlyphs">06:00</text>
<line x1="376.75" x2="376.75" y1="573.5" y2="579.3" stroke="#333" stroke-width="1.1"/>
<text x="377.45" y="588.9" font-size="11.5" text-anchor="middle" fill="#4d4d4d" textLength="25.3" lengthAdjust="spacingAndGlyphs">06:00</text>
<line x1="471.12" x2="471.12" y1="549" y2="555" stroke="#333" stroke-width="1.1"/>
<text x="471.12" y="564.8" font-size="11.5" text-anchor="middle" fill="#4d4d4d" textLength="25.3" lengthAdjust="spacingAndGlyphs">08:00</text>
<line x1="470.70" x2="470.70" y1="573.5" y2="579.3" stroke="#333" stroke-width="1.1"/>
<text x="471.40" y="588.9" font-size="11.5" text-anchor="middle" fill="#4d4d4d" textLength="25.3" lengthAdjust="spacingAndGlyphs">08:00</text>
<line x1="565.45" x2="565.45" y1="549" y2="555" stroke="#333" stroke-width="1.1"/>
<text x="565.45" y="564.8" font-size="11.5" text-anchor="middle" fill="#4d4d4d" textLength="25.3" lengthAdjust="spacingAndGlyphs">10:00</text>
<line x1="564.65" x2="564.65" y1="573.5" y2="579.3" stroke="#333" stroke-width="1.1"/>
<text x="565.35" y="588.9" font-size="11.5" text-anchor="middle" fill="#4d4d4d" textLength="25.3" lengthAdjust="spacingAndGlyphs">10:00</text>
<line x1="659.78" x2="659.78" y1="549" y2="555" stroke="#333" stroke-width="1.1"/>
<text x="659.78" y="564.8" font-size="11.5" text-anchor="middle" fill="#4d4d4d" textLength="25.3" lengthAdjust="spacingAndGlyphs">12:00</text>
<line x1="658.60" x2="658.60" y1="573.5" y2="579.3" stroke="#333" stroke-width="1.1"/>
<text x="659.30" y="588.9" font-size="11.5" text-anchor="middle" fill="#4d4d4d" textLength="25.3" lengthAdjust="spacingAndGlyphs">12:00</text>
<line x1="754.11" x2="754.11" y1="549" y2="555" stroke="#333" stroke-width="1.1"/>
<text x="754.11" y="564.8" font-size="11.5" text-anchor="middle" fill="#4d4d4d" textLength="25.3" lengthAdjust="spacingAndGlyphs">14:00</text>
<line x1="752.55" x2="752.55" y1="573.5" y2="579.3" stroke="#333" stroke-width="1.1"/>
<text x="753.25" y="588.9" font-size="11.5" text-anchor="middle" fill="#4d4d4d" textLength="25.3" lengthAdjust="spacingAndGlyphs">14:00</text>
<line x1="848.44" x2="848.44" y1="549" y2="555" stroke="#333" stroke-width="1.1"/>
<text x="848.44" y="564.8" font-size="11.5" text-anchor="middle" fill="#4d4d4d" textLength="25.3" lengthAdjust="spacingAndGlyphs">16:00</text>
<line x1="846.50" x2="846.50" y1="573.5" y2="579.3" stroke="#333" stroke-width="1.1"/>
<text x="847.20" y="588.9" font-size="11.5" text-anchor="middle" fill="#4d4d4d" textLength="25.3" lengthAdjust="spacingAndGlyphs">16:00</text>
<text x="467" y="87.6" font-size="15.3" text-anchor="middle" fill="#222" textLength="99" lengthAdjust="spacingAndGlyphs">Multiple x-axes</text>
<rect x="415.5" y="107" width="9.5" height="9.5" rx="2" fill="#62c60e"/>
<text x="430" y="116.6" font-size="10.6" fill="#444" textLength="34" lengthAdjust="spacingAndGlyphs">Layer 1</text>
<rect x="468.5" y="107" width="9.5" height="9.5" rx="2" fill="#e8a013"/>
<text x="483" y="116.6" font-size="10.6" fill="#444" textLength="34.5" lengthAdjust="spacingAndGlyphs">Layer 2</text>
</svg></div>
<div id="rph"></div><div id="rpb"></div>
<svg class="ti" style="left:927px;top:32px" width="305" height="23" viewBox="927 32 305 23">
 <circle cx="938.400" cy="42.300" r="3.700" fill="none" stroke="#333" stroke-width="1.600"/><path d="M941 45.200l3 3" stroke="#333" stroke-width="2"/>
 <circle cx="1159.100" cy="42.600" r="5.300" fill="#333"/><text x="1159.200" y="46" font-size="9" font-weight="bold" text-anchor="middle" fill="#ebebeb" font-family="'Liberation Sans',sans-serif">?</text>
 <path d="M1176.800 38.800A5.300 1.900 0 0 1 1187.400 38.800V46.300A5.300 1.900 0 0 1 1176.800 46.300Z" fill="#333"/><g fill="none" stroke="#ebebeb" stroke-width="0.900"><path d="M1176.300 40.500A5.800 2 0 0 0 1187.900 40.500"/><path d="M1176.300 43.300A5.800 2 0 0 0 1187.900 43.300"/><path d="M1176.300 46A5.800 2 0 0 0 1187.900 46"/></g>
 <path d="M1200.300 43.300c2.500-4.400 9-4.400 11.600 0c-2.600 4.400-9.100 4.400-11.600 0z" fill="none" stroke="#333" stroke-width="1.100"/><circle cx="1206.100" cy="42.800" r="2.600" fill="#333"/>
 <path d="M1228 39.800l3.600 3.100-3.600 3.100z" fill="#555"/>
</svg>
<div id="rpt">CHARTGL</div>
<div id="rp">
<div class="sec" style="top:-15.6px"><span class="caret-d"></span><span class="sect">X-AXIS 1</span><svg class="trash" style="margin-top:0px" width="9" height="10" viewBox="0 0 9 10"><path d="M3.2 1.6v-1h2.600v1M0.2 2h8.600M1.200 2.300l0.400 7.100h5.800l0.400-7.100" fill="none" stroke="#222" stroke-width="1.100"/><path d="M3.200 3.600v4.600M4.500 3.600v4.600M5.800 3.600v4.600" fill="none" stroke="#222" stroke-width="0.750"/></svg></div>
<div class="lbl" style="top:21.7px">X-Axis Type</div>
<div class="inp sel" style="top:21.1px">Linear<i></i></div>
<div class="lbl" style="top:43.2px">Position</div>
<div class="inp sel" style="top:42.5px">Bottom<i></i></div>
<div class="lbl" style="top:64.7px">Height</div>
<div class="inp num" style="top:63.9px">0</div>
<div class="lbl" style="top:86.2px">Number of Ticks</div>
<div class="inp num" style="top:85.3px">10</div>
<div class="lbl" style="top:107.7px">Color</div>
<div class="col" style="top:106.9px"><svg class="drop" width="9.400" height="12.400" viewBox="0 0 8 11"><path d="M4 0.2C3.4 2.6 0.5 4.6 0.5 7.2a3.5 3.5 0 0 0 7 0C7.5 4.600 4.6 2.6 4 0.200z" fill="#2a2a2a"/><path d="M2.500 7.200c0 1.100 .500 1.800 1.400 1.900" fill="none" stroke="#e4e4e4" stroke-width="1.100"/></svg><div class="colw"><svg class="rx" width="9" height="9" viewBox="0 0 9 9"><path d="M1.400 1.400l6.200 6.200M7.600 1.400l-6.200 6.200" stroke="#ff0000" stroke-width="2.300"/></svg></div></div>
<div class="lbl" style="top:129.2px">Stacked</div>
<div class="chk" style="top:129.5px"></div>
<div class="sub" style="top:147.9px;height:34px"><span class="caret-r"></span><span class="subt">RANGE</span></div>
<div class="sub" style="top:181.9px;height:34px"><span class="caret-r"></span><span class="subt">GRIDLINES</span></div>
<div class="sub" style="top:215.9px;height:34px"><span class="caret-r"></span><span class="subt">FORMAT</span></div>
<div class="sub" style="top:249.9px;height:33px"><span class="caret-r"></span><span class="subt">TITLE</span></div>
<div class="sec" style="top:291.3px"><span class="caret-d"></span><span class="sect">X-AXIS 2</span><svg class="trash" style="margin-top:0px" width="9" height="10" viewBox="0 0 9 10"><path d="M3.2 1.6v-1h2.600v1M0.2 2h8.600M1.200 2.300l0.400 7.100h5.800l0.400-7.100" fill="none" stroke="#222" stroke-width="1.100"/><path d="M3.200 3.600v4.600M4.500 3.600v4.600M5.800 3.600v4.600" fill="none" stroke="#222" stroke-width="0.750"/></svg></div>
<div class="lbl" style="top:328.6px">X-Axis Type</div>
<div class="inp sel" style="top:328.0px">Linear<i></i></div>
<div class="lbl" style="top:350.1px">Position</div>
<div class="inp sel" style="top:349.4px">Bottom<i></i></div>
<div class="lbl" style="top:371.6px">Height</div>
<div class="inp num" style="top:370.8px">0</div>
<div class="lbl" style="top:393.1px">Number of Ticks</div>
<div class="inp num" style="top:392.2px">10</div>
<div class="lbl" style="top:414.6px">Color</div>
<div class="col" style="top:413.8px"><svg class="drop" width="9.400" height="12.400" viewBox="0 0 8 11"><path d="M4 0.2C3.4 2.6 0.5 4.6 0.5 7.2a3.5 3.5 0 0 0 7 0C7.5 4.600 4.6 2.6 4 0.200z" fill="#2a2a2a"/><path d="M2.500 7.200c0 1.100 .500 1.800 1.400 1.900" fill="none" stroke="#e4e4e4" stroke-width="1.100"/></svg><div class="colw"><svg class="rx" width="9" height="9" viewBox="0 0 9 9"><path d="M1.400 1.400l6.200 6.200M7.600 1.400l-6.200 6.200" stroke="#ff0000" stroke-width="2.300"/></svg></div></div>
<div class="lbl" style="top:436.1px">Stacked</div>
<div class="chk" style="top:436.4px"></div>
<div class="sub" style="top:454.8px;height:34px"><span class="caret-r"></span><span class="subt">RANGE</span></div>
<div class="sub" style="top:488.8px;height:34px"><span class="caret-r"></span><span class="subt">GRIDLINES</span></div>
<div class="sub" style="top:522.8px;height:34px"><span class="caret-r"></span><span class="subt">FORMAT</span></div>
<div class="sub" style="top:556.8px;height:33px"><span class="caret-r"></span><span class="subt">TITLE</span></div>
<div class="sec" style="top:597.2px"><span class="caret-d"></span><span class="sect">X-AXIS 3</span><svg class="trash" style="margin-top:1px" width="9" height="10" viewBox="0 0 9 10"><path d="M3.2 1.6v-1h2.600v1M0.2 2h8.600M1.200 2.300l0.400 7.100h5.800l0.400-7.100" fill="none" stroke="#222" stroke-width="1.100"/><path d="M3.200 3.600v4.600M4.500 3.600v4.600M5.800 3.600v4.600" fill="none" stroke="#222" stroke-width="0.750"/></svg></div>
<div class="lbl" style="top:635.4px">X-Axis Type</div>
<div class="inp sel" style="top:634.4px">Linear<i></i></div>
<div class="lbl" style="top:657.0px">Position</div>
<div class="inp sel" style="top:655.8px">Top<i></i></div>
<div class="lbl" style="top:678.6px">Height</div>
<div class="inp num" style="top:677.2px">0</div>
<div class="lbl" style="top:700.2px">Number of Ticks</div>
<div class="inp num" style="top:698.6px">10</div>
<div class="lbl" style="top:721.8px">Color</div>
<div class="col" style="top:720.2px"><svg class="drop" width="9.400" height="12.400" viewBox="0 0 8 11"><path d="M4 0.2C3.4 2.6 0.5 4.6 0.5 7.2a3.5 3.5 0 0 0 7 0C7.5 4.600 4.6 2.6 4 0.200z" fill="#2a2a2a"/><path d="M2.500 7.200c0 1.100 .500 1.800 1.400 1.900" fill="none" stroke="#e4e4e4" stroke-width="1.100"/></svg><div class="colw"><svg class="rx" width="9" height="9" viewBox="0 0 9 9"><path d="M1.400 1.400l6.200 6.200M7.600 1.400l-6.200 6.200" stroke="#ff0000" stroke-width="2.300"/></svg></div></div>
<div class="lbl" style="top:743.4px">Stacked</div>
<div class="chk" style="top:742.8px"></div>
<div class="sub" style="top:760.7px;height:34px"><span class="caret-r"></span><span class="subt">RANGE</span></div>
<div class="sub" style="top:794.7px;height:34px"><span class="caret-r"></span><span class="subt">GRIDLINES</span></div>
<div class="sub" style="top:828.7px;height:34px"><span class="caret-r"></span><span class="subt">FORMAT</span></div>
<div class="sub" style="top:862.7px;height:33px"><span class="caret-r"></span><span class="subt">TITLE</span></div>
</div>
<div id="sb"></div><div id="sbt"></div>
<svg class="ti" style="left:1226px;top:56px" width="6" height="30"><path d="M3.200 19.500l2.800-3v3z" fill="#555"/></svg>
</body></html>
